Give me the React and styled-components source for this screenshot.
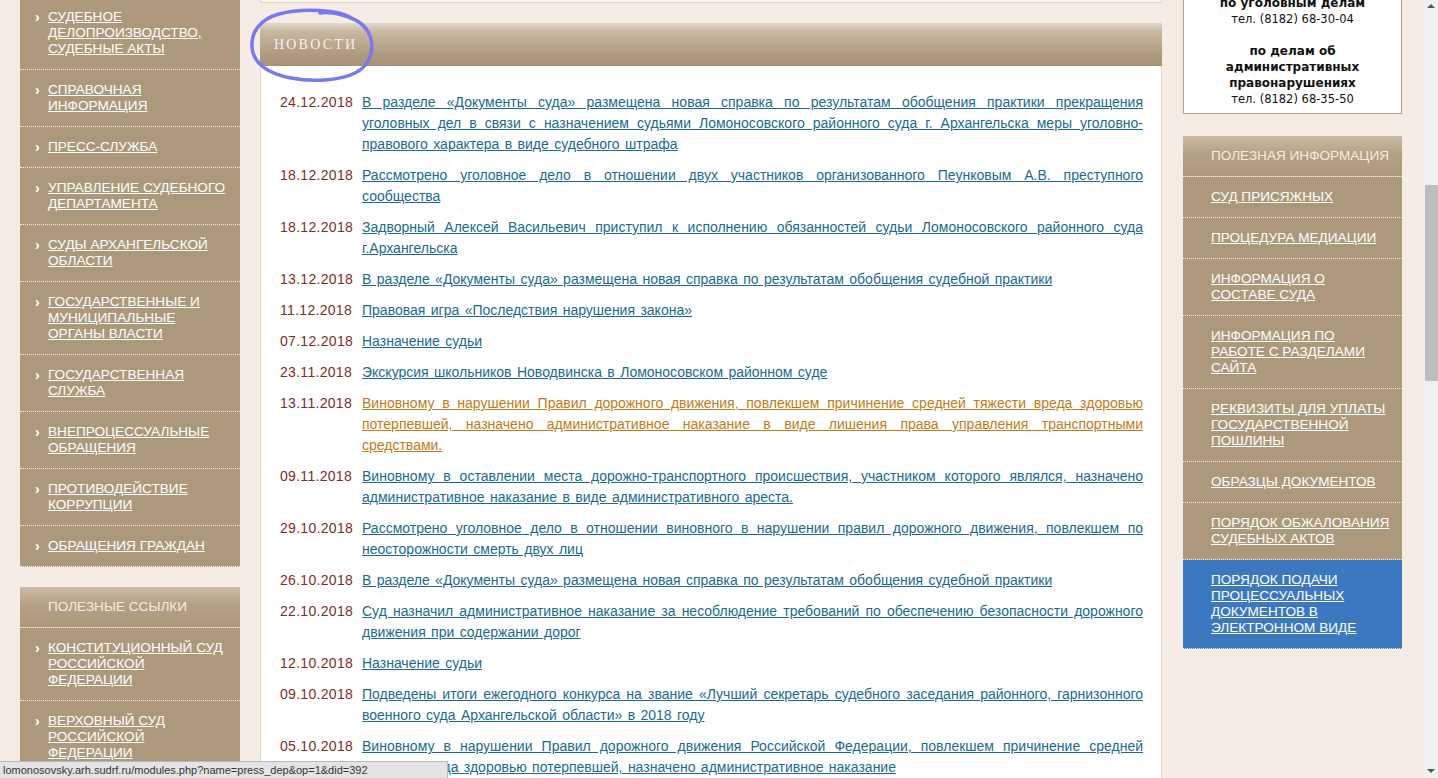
import React from "react";
import styled, { createGlobalStyle } from "styled-components";

const Global = createGlobalStyle`
  html, body { margin: 0; padding: 0; height: 100%; overflow: hidden; }
  body { background: #f5ede5; font-family: "Liberation Sans", Arial, sans-serif; }
  #root { height: 100%; }
`;

const Viewport = styled.div`
  display: flex;
  height: 778px;
  width: 1438px;
  overflow: hidden;
`;

const Page = styled.div`
  flex: 1;
  display: grid;
  grid-template-columns: 220px 902px 220px;
  column-gap: 20px;
  padding-left: 20px;
  align-items: start;
  height: 778px;
  overflow: hidden;
  & > :nth-child(3) { margin-left: 1px; }
`;

const Column = styled.div`
  display: flex;
  flex-direction: column;
  gap: ${(p) => p.$gap || 0}px;
  margin-top: ${(p) => p.$offset || 0}px;
`;

const MenuBlock = styled.div`
  background: #ac997c;
  display: flex;
  flex-direction: column;
`;

const MenuHeader = styled.div`
  background: linear-gradient(#cbbba6 0%, #b4a185 45%, #ac997c 100%);
  color: #f4ede3;
  font-size: 13.6px;
  line-height: 16px;
  padding: 12px 8px 12px 28px;
  border-bottom: 1px dotted #f3ece3;
  text-transform: uppercase;
`;

const MenuItem = styled.div`
  display: flex;
  align-items: flex-start;
  padding: 12px ${(p) => (p.$chevron ? 8 : 12)}px 12px ${(p) => (p.$chevron ? 15 : 28)}px;
  border-bottom: 1px dotted #f3ece3;
  background: ${(p) => (p.$active ? "#3b78c0" : "transparent")};
  font-size: 13.6px;
  line-height: 16px;
`;

const Chevron = styled.span`
  width: 13px;
  flex: none;
  color: #fff;
  font-weight: bold;
  font-size: 14px;
  line-height: 16px;
`;

const MenuLink = styled.a`
  color: #fff;
  text-decoration: underline;
  text-transform: uppercase;
  cursor: pointer;
`;

const PrevBox = styled.div`
  height: 2px;
  border: 1px solid #ded3c5;
  border-top: none;
  background: #f9f4ee;
`;

const NewsPanel = styled.div`
  margin-top: 20px;
  background: #fff;
  border-left: 1px solid #e0d6c8;
  border-right: 1px solid #e0d6c8;
  position: relative;
`;

const NewsHeader = styled.div`
  height: 43px;
  display: flex;
  align-items: center;
  padding-left: 14px;
  background: linear-gradient(#e3d8ca 0%, #c9b8a2 20%, #b09c82 70%, #a8937a 100%);
  color: #f7f1ea;
  font-family: "Liberation Serif", "Times New Roman", serif;
  font-size: 14px;
  letter-spacing: 2.2px;
  margin: 0 -1px;
`;

const Circle = styled.svg`
  position: absolute;
  left: -12px;
  top: -17px;
  pointer-events: none;
`;

const NewsList = styled.div`
  padding: 26px 18px 0 19px;
  display: flex;
  flex-direction: column;
  gap: 10px;
`;

const NewsItem = styled.div`
  display: grid;
  grid-template-columns: 82px 1fr;
  font-size: 14px;
  line-height: 21px;
`;

const NewsDate = styled.span`
  color: #7e2e1f;
  letter-spacing: 0.3px;
`;

const NewsText = styled.div`
  text-align: justify;
  word-spacing: 1.5px;
`;

const NewsLink = styled.a`
  color: ${(p) => (p.$visited ? "#c27b17" : "#1b6a8d")};
  text-decoration: underline;
  cursor: pointer;
`;

const InfoBox = styled.div`
  background: #fff;
  border: 1px solid #b3a28a;
  text-align: center;
  font-family: "DejaVu Sans", Verdana, sans-serif;
  font-size: 11.5px;
  line-height: 16px;
  color: #111;
  padding: 0 30px 6px;
`;

const InfoLine = styled.div`
  font-weight: ${(p) => (p.$bold ? "bold" : "normal")};
  font-size: ${(p) => (p.$bold ? "12px" : "11.5px")};
  min-height: 16px;
`;

const Scrollbar = styled.div`
  width: 14px;
  flex: none;
  background: #f0f0f0;
  display: flex;
  flex-direction: column;
  align-items: center;
  justify-content: space-between;
  position: relative;
`;

const Arrow = styled.div`
  width: 0;
  height: 0;
  border-left: 4px solid transparent;
  border-right: 4px solid transparent;
  ${(p) => (p.$down ? "border-top: 4px solid #555;" : "border-bottom: 4px solid #555;")}
  margin: ${(p) => (p.$down ? "0 0 5px" : "4px 0 0")};
`;

const Thumb = styled.div`
  position: absolute;
  left: 1px;
  right: 0;
  top: 185px;
  height: 196px;
  background: #bdbdbd;
`;

const StatusBar = styled.div`
  position: fixed;
  left: 0;
  bottom: 0;
  width: 448px;
  height: 17px;
  background: #e4e4e4;
  border-top: 1px solid #b9b9b9;
  border-right: 1px solid #b9b9b9;
  font-family: "Liberation Sans", Arial, sans-serif;
  font-size: 11px;
  line-height: 17px;
  color: #333;
  padding-left: 3px;
  box-sizing: border-box;
  white-space: nowrap;
  overflow: hidden;
`;

const leftMenu1 = [
  "Судебное делопроизводство, судебные акты",
  "Справочная информация",
  "Пресс-служба",
  "Управление Судебного департамента",
  "Суды Архангельской области",
  "Государственные и муниципальные органы власти",
  "Государственная служба",
  "Внепроцессуальные обращения",
  "Противодействие коррупции",
  "Обращения граждан",
];

const leftMenu2 = [
  "Конституционный Суд Российской Федерации",
  "Верховный Суд Российской Федерации",
];

const rightMenu = [
  "Суд присяжных",
  "Процедура медиации",
  "Информация о составе суда",
  "Информация по работе с разделами сайта",
  "Реквизиты для уплаты государственной пошлины",
  "Образцы документов",
  "Порядок обжалования судебных актов",
];

const news = [
  ["24.12.2018", "В разделе «Документы суда» размещена новая справка по результатам обобщения практики прекращения уголовных дел в связи с назначением судьями Ломоносовского районного суда г. Архангельска меры уголовно-правового характера в виде судебного штрафа"],
  ["18.12.2018", "Рассмотрено уголовное дело в отношении двух участников организованного Пеунковым А.В. преступного сообщества"],
  ["18.12.2018", "Задворный Алексей Васильевич приступил к исполнению обязанностей судьи Ломоносовского районного суда г.Архангельска"],
  ["13.12.2018", "В разделе «Документы суда» размещена новая справка по результатам обобщения судебной практики"],
  ["11.12.2018", "Правовая игра «Последствия нарушения закона»"],
  ["07.12.2018", "Назначение судьи"],
  ["23.11.2018", "Экскурсия школьников Новодвинска в Ломоносовском районном суде"],
  ["13.11.2018", "Виновному в нарушении Правил дорожного движения, повлекшем причинение средней тяжести вреда здоровью потерпевшей, назначено административное наказание в виде лишения права управления транспортными средствами.", true],
  ["09.11.2018", "Виновному в оставлении места дорожно-транспортного происшествия, участником которого являлся, назначено административное наказание в виде административного ареста."],
  ["29.10.2018", "Рассмотрено уголовное дело в отношении виновного в нарушении правил дорожного движения, повлекшем по неосторожности смерть двух лиц"],
  ["26.10.2018", "В разделе «Документы суда» размещена новая справка по результатам обобщения судебной практики"],
  ["22.10.2018", "Суд назначил административное наказание за несоблюдение требований по обеспечению безопасности дорожного движения при содержании дорог"],
  ["12.10.2018", "Назначение судьи"],
  ["09.10.2018", "Подведены итоги ежегодного конкурса на звание «Лучший секретарь судебного заседания районного, гарнизонного военного суда Архангельской области» в 2018 году"],
  ["05.10.2018", "Виновному в нарушении Правил дорожного движения Российской Федерации, повлекшем причинение средней тяжести вреда здоровью потерпевшей, назначено административное наказание"],
];

export default function App() {
  return (
    <>
      <Global />
      <Viewport>
        <Page>
          <Column $offset={-3} $gap={20}>
            <MenuBlock>
              {leftMenu1.map((t) => (
                <MenuItem key={t} $chevron>
                  <Chevron>›</Chevron>
                  <MenuLink>{t}</MenuLink>
                </MenuItem>
              ))}
            </MenuBlock>
            <MenuBlock>
              <MenuHeader>Полезные ссылки</MenuHeader>
              {leftMenu2.map((t) => (
                <MenuItem key={t} $chevron>
                  <Chevron>›</Chevron>
                  <MenuLink>{t}</MenuLink>
                </MenuItem>
              ))}
            </MenuBlock>
          </Column>

          <Column>
            <PrevBox />
            <NewsPanel>
              <NewsHeader>НОВОСТИ</NewsHeader>
              <Circle width="140" height="82" viewBox="0 0 140 82">
                <path
                  d="M104 13 C 90 3, 52 2, 30 8 C 12 13, 2 25, 3 41 C 4 58, 20 68, 42 72 C 62 76, 90 75, 106 67 C 120 60, 125 47, 122 33 C 119 21, 109 13, 93 9 C 85 7, 77 6, 71 7"
                  fill="none"
                  stroke="#7878ef"
                  strokeWidth="3.5"
                  strokeLinecap="round"
                  strokeLinejoin="round"
                />
              </Circle>
              <NewsList>
                {news.map(([d, t, v], i) => (
                  <NewsItem key={i}>
                    <NewsDate>{d}</NewsDate>
                    <NewsText>
                      <NewsLink $visited={v}>{t}</NewsLink>
                    </NewsText>
                  </NewsItem>
                ))}
              </NewsList>
            </NewsPanel>
          </Column>

          <Column $offset={-6} $gap={22}>
            <InfoBox>
              <InfoLine $bold>по уголовным делам</InfoLine>
              <InfoLine>тел. (8182) 68-30-04</InfoLine>
              <InfoLine />
              <InfoLine $bold>по делам об административных правонарушениях</InfoLine>
              <InfoLine>тел. (8182) 68-35-50</InfoLine>
            </InfoBox>
            <MenuBlock>
              <MenuHeader>Полезная информация</MenuHeader>
              {rightMenu.map((t) => (
                <MenuItem key={t}>
                  <MenuLink>{t}</MenuLink>
                </MenuItem>
              ))}
              <MenuItem $active>
                <MenuLink>Порядок подачи процессуальных документов в электронном виде</MenuLink>
              </MenuItem>
            </MenuBlock>
          </Column>
        </Page>
        <Scrollbar>
          <Arrow />
          <Thumb />
          <Arrow $down />
        </Scrollbar>
      </Viewport>
      <StatusBar>lomonosovsky.arh.sudrf.ru/modules.php?name=press_dep&amp;op=1&amp;did=392</StatusBar>
    </>
  );
}
